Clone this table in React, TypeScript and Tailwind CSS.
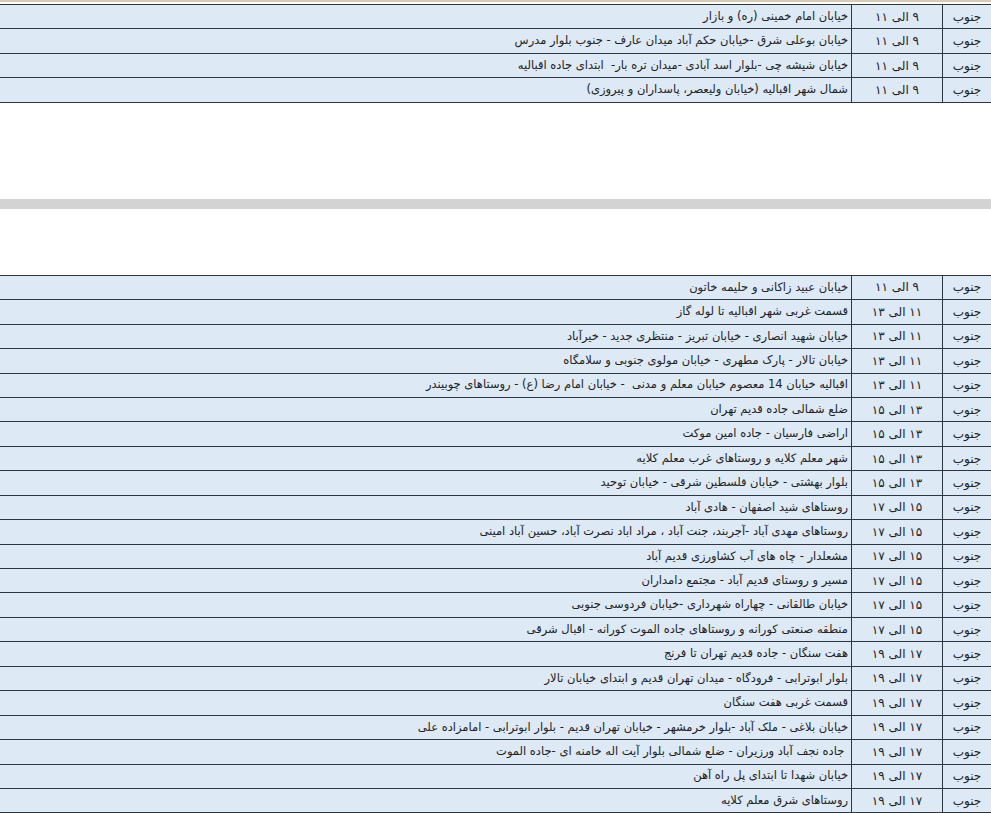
type Row = { area: string; time: string; desc: string }

const first: Row[] = [
  { area: "جنوب", time: "۹ الی ۱۱", desc: "خیابان امام خمینی (ره) و بازار" },
  { area: "جنوب", time: "۹ الی ۱۱", desc: "خیابان بوعلی شرق -خیابان حکم آباد میدان عارف - جنوب بلوار مدرس" },
  { area: "جنوب", time: "۹ الی ۱۱", desc: "خیابان شیشه چی -بلوار اسد آبادی -میدان تره بار-  ابتدای جاده اقبالیه" },
  { area: "جنوب", time: "۹ الی ۱۱", desc: "شمال شهر اقبالیه (خیابان ولیعصر، پاسداران و پیروزی)" },
]

const second: Row[] = [
  { area: "جنوب", time: "۹ الی ۱۱", desc: "خیابان عبید زاکانی و حلیمه خاتون" },
  { area: "جنوب", time: "۱۱ الی ۱۳", desc: "قسمت غربی شهر اقبالیه تا لوله گاز" },
  { area: "جنوب", time: "۱۱ الی ۱۳", desc: "خیابان شهید انصاری - خیابان تبریز - منتظری جدید - خیرآباد" },
  { area: "جنوب", time: "۱۱ الی ۱۳", desc: "خیابان تالار - پارک مطهری - خیابان مولوی جنوبی و سلامگاه" },
  { area: "جنوب", time: "۱۱ الی ۱۳", desc: "اقبالیه خیابان 14 معصوم خیابان معلم و مدنی  - خیابان امام رضا (ع) - روستاهای چوبیندر" },
  { area: "جنوب", time: "۱۳ الی ۱۵", desc: "ضلع شمالی جاده قدیم تهران" },
  { area: "جنوب", time: "۱۳ الی ۱۵", desc: "اراضی فارسیان - جاده امین موکت" },
  { area: "جنوب", time: "۱۳ الی ۱۵", desc: "شهر معلم کلایه و روستاهای غرب معلم کلایه" },
  { area: "جنوب", time: "۱۳ الی ۱۵", desc: "بلوار بهشتی - خیابان فلسطین شرقی - خیابان توحید" },
  { area: "جنوب", time: "۱۵ الی ۱۷", desc: "روستاهای شید اصفهان - هادی آباد" },
  { area: "جنوب", time: "۱۵ الی ۱۷", desc: "روستاهای مهدی آباد -آجربند، جنت آباد ، مراد اباد نصرت آباد، حسین آباد امینی" },
  { area: "جنوب", time: "۱۵ الی ۱۷", desc: "مشعلدار - چاه های آب کشاورزی قدیم آباد" },
  { area: "جنوب", time: "۱۵ الی ۱۷", desc: "مسیر و روستای قدیم آباد - مجتمع دامداران" },
  { area: "جنوب", time: "۱۵ الی ۱۷", desc: "خیابان طالقانی - چهاراه شهرداری -خیابان فردوسی جنوبی" },
  { area: "جنوب", time: "۱۵ الی ۱۷", desc: "منطقه صنعتی کورانه و روستاهای جاده الموت کورانه - اقبال شرقی" },
  { area: "جنوب", time: "۱۷ الی ۱۹", desc: "هفت سنگان - جاده قدیم تهران تا فرنج" },
  { area: "جنوب", time: "۱۷ الی ۱۹", desc: "بلوار ابوترابی - فرودگاه - میدان تهران قدیم و ابتدای خیابان تالار" },
  { area: "جنوب", time: "۱۷ الی ۱۹", desc: "قسمت غربی هفت سنگان" },
  { area: "جنوب", time: "۱۷ الی ۱۹", desc: "خیابان بلاغی - ملک آباد -بلوار خرمشهر - خیابان تهران قدیم - بلوار ابوترابی - امامزاده علی" },
  { area: "جنوب", time: "۱۷ الی ۱۹", desc: " جاده نجف آباد ورزیران - ضلع شمالی بلوار آیت اله خامنه ای -جاده الموت" },
  { area: "جنوب", time: "۱۷ الی ۱۹", desc: "خیابان شهدا تا ابتدای پل راه آهن" },
  { area: "جنوب", time: "۱۷ الی ۱۹", desc: "روستاهای شرق معلم کلایه" },
]

const Table = ({ rows }: { rows: Row[] }) => {
  return (
    <div dir="rtl" className="border-t border-[#2e3740] bg-[#dde9f5]">
      {rows.map((r, i) => (
        <div key={i} className="grid grid-cols-[49px_91px_1fr] h-[24.45px] border-b border-[#2e3740] text-[11.5px] text-[#222] leading-none">
          <div className="flex items-center justify-center border-l border-[#2e3740] text-[12px]">{r.area}</div>
          <div className="flex items-center justify-center border-l border-[#2e3740] text-[12px]">{r.time}</div>
          <div className="flex items-center pr-[3px] whitespace-pre">{r.desc}</div>
        </div>
      ))}
    </div>
  )
}

export default function App() {
  return (
    <div className="w-[991px] h-[813px] overflow-hidden bg-white" style={{ fontFamily: '"DejaVu Sans", "Noto Sans", sans-serif' }}>
      {/* top edge */}
      <div className="h-[2px] bg-[#d8ccb4]" />
      <div className="h-[2px] bg-white" />
      <Table rows={first} />
      {/* spacer + grey band */}
      <div className="h-[96px]" />
      <div className="h-[10px] bg-[#d3d3d3]" />
      <div className="h-[66px]" />
      <Table rows={second} />
    </div>
  )
}
